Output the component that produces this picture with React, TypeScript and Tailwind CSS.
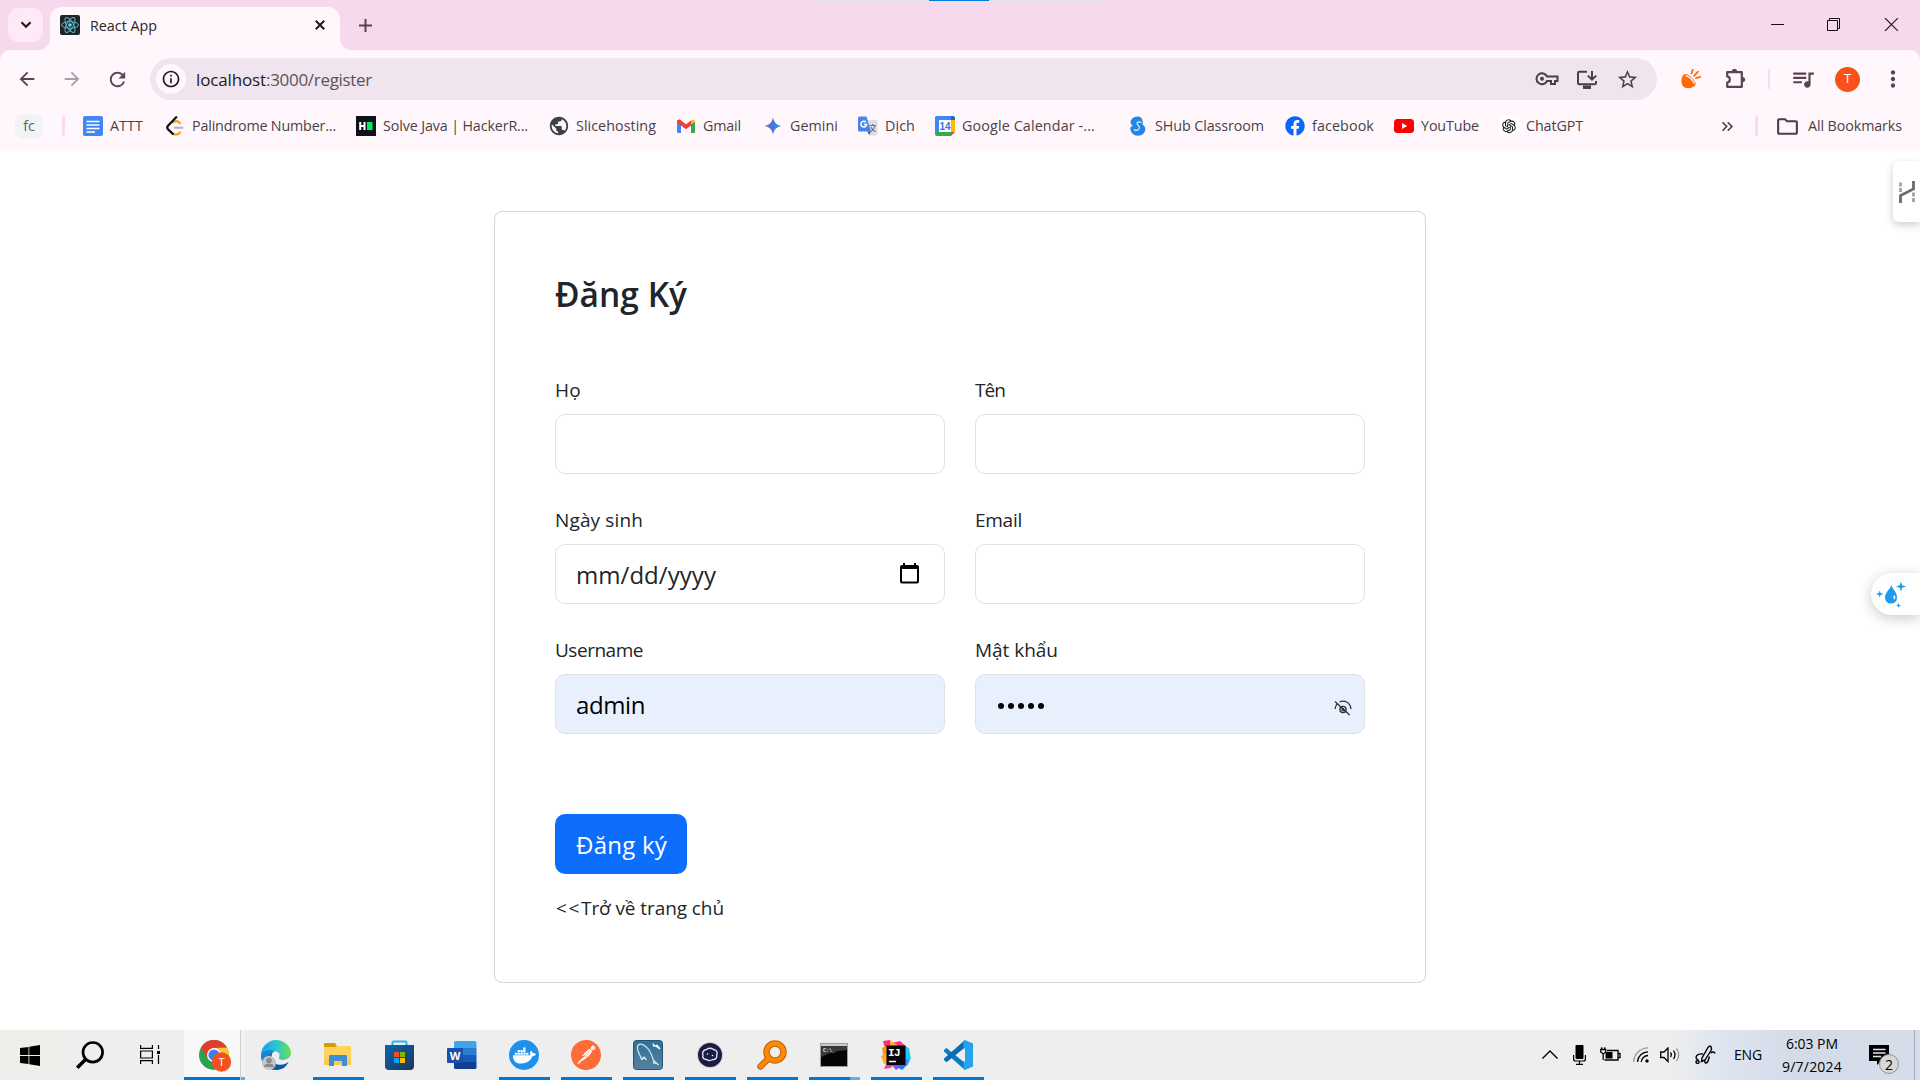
import React, { useLayoutEffect, useRef, useState } from "react";
import {
  MdArrowBack, MdArrowForward, MdRefresh, MdStarBorder, MdQueueMusic, MdMoreVert,
  MdOutlineFolder, MdOutlineInfo, MdKeyboardDoubleArrowRight, MdPublic,
} from "react-icons/md";
import { AiOutlineOpenAI } from "react-icons/ai";
import { FaDocker, FaFacebook } from "react-icons/fa";
import { SiPostman } from "react-icons/si";

/* Text that is spaced out to an exact width. */
function Fit({ w, className = "", children }: { w: number; className?: string; children: string }) {
  const ref = useRef<HTMLSpanElement>(null);
  const [ls, setLs] = useState(0);
  useLayoutEffect(() => {
    if (ref.current) {
      const n = ref.current.getBoundingClientRect().width;
      setLs((w - n) / children.length);
    }
  }, [w, children]);
  return (
    <span ref={ref} className={"inline-block whitespace-pre " + className} style={{ letterSpacing: ls }}>
      {children}
    </span>
  );
}

const ReactLogo = () => (
  <svg width="20" height="20" viewBox="0 0 20 20">
    <rect width="20" height="20" rx="2" fill="#222325" />
    <g fill="none" stroke="#58b6cf" strokeWidth="1">
      <ellipse cx="10" cy="10" rx="8.4" ry="3.3" />
      <ellipse cx="10" cy="10" rx="8.4" ry="3.3" transform="rotate(60 10 10)" />
      <ellipse cx="10" cy="10" rx="8.4" ry="3.3" transform="rotate(120 10 10)" />
    </g>
    <circle cx="10" cy="10" r="1.8" fill="#61dafb" />
  </svg>
);

function TabStrip() {
  return (
    <div className="relative flex h-[50px] bg-[#f7d9ed]">
      <div className="ml-2 mt-2 flex h-[34px] w-[35px] items-center justify-center rounded-[11px] bg-[#feeaf6]">
        <svg width="12" height="8" viewBox="0 0 12 8" fill="none" stroke="#1f1a1e" strokeWidth="2.2"><path d="M1.500 1.300 6 5.800l4.500-4.500" /></svg>
      </div>
      <div className="relative ml-[7px] mt-[7px] flex h-[43px] w-[290px] items-center rounded-t-[12px] bg-[#fff7fb] pb-[7px] pl-[10px] pr-[15px]">
        <svg className="absolute -left-3 bottom-0" width="12" height="12"><path d="M12 0v12H0A12 12 0 0 0 12 0" fill="#fff7fb" /></svg>
        <svg className="absolute -right-3 bottom-0" width="12" height="12"><path d="M0 0v12h12A12 12 0 0 1 0 0" fill="#fff7fb" /></svg>
        <ReactLogo />
        <Fit w={67} className="ml-[10px] pt-[2px] text-[14.3px] leading-5 text-[#2b2629]">React App</Fit>
        <svg className="ml-auto" width="10" height="10" viewBox="0 0 10 10" stroke="#1f1a1e" strokeWidth="2"><path d="m.8.8 8.400 8.400M9.200.8.8 9.200" /></svg>
      </div>
      <svg className="ml-[19px] mt-[19px]" width="13" height="13" stroke="#5a434f" strokeWidth="2"><path d="M0 6.500h13M6.500 0v13" /></svg>
      <div className="absolute left-[809px] top-0 h-px w-[301px] bg-[#e2e0e2]" />
      <div className="absolute left-[929px] top-0 h-px w-[60px] bg-[#0078d7]" />
      <svg className="ml-auto mr-[22px] mt-[18px]" width="127" height="13" fill="none" stroke="#111" strokeWidth="1">
        <path d="M0 6.500h13" />
        <path d="M56.500 2.500h10v10h-10zM58.500 2.500v-2h10v10h-2" />
        <path d="m114 0 13 13M127 0l-13 13" stroke="#222" strokeWidth="1.200" />
      </svg>
    </div>
  );
}

function Toolbar() {
  return (
    <div className="bg-[#f7d9ed]">
      <div className="flex h-[58px] items-center rounded-t-[10px] bg-[#fff7fb] text-[#5a434f]">
        <MdArrowBack className="ml-[16px] size-[22px]" />
        <MdArrowForward className="ml-[23px] size-[22px] text-[#aaa0a7]" />
        <MdRefresh className="ml-[23px] size-[23px]" />
        <div className="ml-[21px] flex h-[42px] w-[1507px] items-center rounded-full bg-[#f0e5ee] text-[#4b3f47]">
          <div className="ml-[6px] flex size-[30px] items-center justify-center rounded-full bg-[#fff7fb]">
            <MdOutlineInfo className="size-[20px] text-[#1f1a1e]" />
          </div>
          <div className="ml-[10px] flex pt-[2px] text-[17px] leading-6">
            <Fit w={70} className="text-[#1f1a1e]">localhost</Fit>
            <Fit w={106} className="text-[#5c5159]">:3000/register</Fit>
          </div>
          <svg className="ml-auto" width="24" height="16" viewBox="0 0 24 16" fill="none" stroke="currentColor" strokeWidth="2">
            <path d="M12 5.500h10.500v4.500h-2.500v3h-4v-3h-4A5.500 5.500 0 1 1 12 5.500z" />
            <circle cx="7" cy="7.700" r="2" fill="currentColor" stroke="none" />
          </svg>
          <svg className="ml-[17px] mt-px" width="22" height="20" viewBox="0 0 22 20" fill="none" stroke="currentColor" strokeWidth="2">
            <path d="M11 1.800H3.200q-1.200 0-1.200 1.200v10q0 1.200 1.200 1.200h15.600q1.200 0 1.200-1.200v-2M16 1v8M11.800 5.600 16 9.600l4.200-4" />
            <path d="M7 17.200h8" strokeWidth="3.500" />
          </svg>
          <MdStarBorder className="ml-[18px] mr-[18px] mt-px size-[23px]" />
        </div>
        <svg className="ml-[24px]" width="20" height="20" viewBox="0 0 20 20">
          <path d="M2 6.200C-.6 10.500.2 16 3.200 18.300c4 2.200 9.300.8 11.600-2.800C10.500 15.600 5 12.500 2 6.200z" fill="#ff6a00" />
          <path d="M2.300 6c1.200-1.800 4.700-.8 8 2.300s5 5.700 4.200 7.200c-1.400 1.300-5-.2-8-3S1.600 7.500 2.300 6z" fill="#ff6a00" />
          <path d="M4.500 7c1.500-.3 3.700 1 5.700 3s3.200 3.600 3 4.600" fill="none" stroke="#fff7fb" strokeWidth="1.300" />
          <path d="M10.500 4.500 11.700.8M13 6.800l4-4.200M15 9.200l4-1.400" stroke="#ff6a00" strokeWidth="1.800" strokeLinecap="round" />
        </svg>
        <svg className="ml-[24px]" width="21" height="21" viewBox="0 0 21 21" fill="none" stroke="currentColor" strokeWidth="2.200">
          <path d="M2.200 3.200h14.600v14.600H2.200v-4.300c3.500-.4 3.500-5.700 0-6.100z" strokeLinejoin="round" />
          <path d="M6.800 2.600a2.700 2.700 0 0 1 5.400 0zM17.500 8a2.600 2.600 0 0 1 0 5.200z" fill="currentColor" stroke="none" />
        </svg>
        <div className="ml-[22px] h-5 w-0.5 bg-[#ffd6f3]" />
        <MdQueueMusic className="ml-[20px] size-[26px]" />
        <div className="ml-[19px] flex size-[25px] items-center justify-center rounded-full bg-[#f9501c] text-[13px] text-white">T</div>
        <MdMoreVert className="ml-[20px] size-[26px]" />
      </div>
    </div>
  );
}

const icons: Record<string, React.ReactNode> = {
  docs: <svg width="20" height="20"><rect width="20" height="20" rx="2" fill="#4285f4" /><path d="M3.500 5.500h13M3.500 9h13M3.500 12.500h13M3.500 16h8.500" stroke="#fff" strokeWidth="1.700" /></svg>,
  leet: (
    <svg width="20" height="20" fill="none" strokeLinecap="round" strokeWidth="2.300">
      <path d="M8.500 6.200c2.300-1.800 4.200-1.400 6.500 1M8.300 17.700c2.200 1.500 4.400 1.200 6.700-1.200" stroke="#f9a11b" />
      <path d="M9.500 11.800h8" stroke="#b3b3b3" strokeWidth="2" />
      <path d="M11.200 1.300 3 9.700q-1.500 1.800 0 3.600l4.800 4.600" stroke="#111" />
    </svg>
  ),
  hr: <svg width="20" height="20"><rect width="20" height="20" fill="#0e141e" /><path d="M4.200 6v8M8.500 6v8M4 10h5" stroke="#fff" strokeWidth="2" /><rect x="11" y="6" width="5.500" height="8" fill="#00ea64" /></svg>,
  slice: <MdPublic className="size-[22px] -m-px text-[#3c4043]" />,
  gmail: (
    <svg width="20" height="20" viewBox="0 0 20 20">
      <path d="M1 5v11q0 1 1 1h3V8z" fill="#4285f4" /><path d="M19 5v11q0 1-1 1h-3V8z" fill="#34a853" />
      <path d="M15 8.500V4.600c2-1.500 4-.6 4 1.400z" fill="#fbbc04" /><path d="M5 8.500V4.600C3 3.100 1 4 1 6z" fill="#c5221f" />
      <path d="m1 5.500 2.500-2.300L10 8.300l5-3.800v5L10 13.200 1 6.400z" fill="#ea4335" />
    </svg>
  ),
  gemini: (
    <svg width="20" height="20" viewBox="0 0 20 20">
      <defs><linearGradient id="gem"><stop offset="0" stopColor="#8a5fd0" /><stop offset=".5" stopColor="#4b74d8" /><stop offset="1" stopColor="#16a8e8" /></linearGradient></defs>
      <path d="M10 1.300c.7 5 3.700 8 8.700 8.700-5 .7-8 3.700-8.700 8.700-.7-5-3.700-8-8.700-8.700 5-.7 8-3.700 8.700-8.700" fill="url(#gem)" />
    </svg>
  ),
  dich: (
    <svg width="20" height="20" viewBox="0 0 20 20">
      <path d="M7 4h11q1.500 0 1.500 1.500V18q0 1.500-1.500 1.500h-6.500z" fill="#dcdee2" />
      <path d="M11.500 9.500h6.500M14.800 8v1.500M16.800 10c-.5 2.500-2 4.200-4 5.500M12.800 11c1 2 2.500 3.500 4.700 4.800" stroke="#71787f" strokeWidth="1.200" fill="none" />
      <path d="M1.500.5h7l4.500 15H1.500Q0 15.500 0 14V2Q0 .5 1.500.5" fill="#4a86ea" /><path d="m9.500 15.500 3.500 0-2 3.500z" fill="#2b4fa8" />
      <path d="M8 6.200A2.900 2.900 0 1 0 8.700 8.500H5.900" fill="none" stroke="#fff" strokeWidth="1.400" />
    </svg>
  ),
  cal: (
    <svg width="20" height="20" viewBox="0 0 20 20">
      <path d="M0 2Q0 0 2 0h16q2 0 2 2v2H0z" fill="#1967d2" /><path d="M0 3h4v13H0zM2 0h14v4H0V2z" fill="#4285f4" />
      <path d="M16 4h4v12h-4z" fill="#fbbc04" /><path d="M0 16h16v4H2q-2 0-2-2z" fill="#34a853" /><path d="M16 16h4l-4 4z" fill="#ea4335" />
      <rect x="4" y="4" width="12" height="12" fill="#fff" />
      <text x="10" y="13.700" textAnchor="middle" fontSize="10" fontWeight="700" fill="#3273dc" fontFamily="Liberation Sans">14</text>
    </svg>
  ),
  shub: (
    <svg width="20" height="20" viewBox="0 0 20 20">
      <path d="M14 3C12.500-.8 6 0 4 2.800 1.500 6 2.500 8.500 5 10c-2.500 0-3.500 2-2.200 5C4.500 20.500 12 21 15.500 17.500c3-3.500 2-7-1-9C15 7 15 4.800 14 3" fill="#2486e4" />
      <path d="M13.500 6.500c-3-1.500-5.500 0-4 2s3 2.500 1.500 4.500-4 1.500-5 .5" fill="none" stroke="#fff7fb" strokeWidth="1.100" />
    </svg>
  ),
  fb: <FaFacebook className="size-5 text-[#0866ff]" />,
  yt: <svg width="20" height="20"><rect y="3" width="20" height="14" rx="3.500" fill="#f00" /><path d="m8 7 5.200 3L8 13z" fill="#fff" /></svg>,
  gpt: <span className="flex size-5 items-center justify-center rounded-sm bg-white"><AiOutlineOpenAI className="size-[18px] text-[#222]" /></span>,
};

const bookmarks: { cls: string; icon: string; label: string; w: number }[] = [
  { cls: "w-[82px]", icon: "docs", label: "ATTT", w: 33 },
  { cls: "w-[191px]", icon: "leet", label: "Palindrome Number...", w: 144 },
  { cls: "w-[193px]", icon: "hr", label: "Solve Java | HackerR...", w: 145 },
  { cls: "w-[127px]", icon: "slice", label: "Slicehosting", w: 80 },
  { cls: "w-[87px]", icon: "gmail", label: "Gmail", w: 38 },
  { cls: "w-[95px]", icon: "gemini", label: "Gemini", w: 48 },
  { cls: "w-[77px]", icon: "dich", label: "Dịch", w: 30 },
  { cls: "w-[193px]", icon: "cal", label: "Google Calendar -...", w: 133 },
  { cls: "w-[157px]", icon: "shub", label: "SHub Classroom", w: 109 },
  { cls: "w-[109px]", icon: "fb", label: "facebook", w: 62 },
  { cls: "w-[105px]", icon: "yt", label: "YouTube", w: 58 },
  { cls: "w-[90px]", icon: "gpt", label: "ChatGPT", w: 57 },
];

function Bookmarks() {
  return (
    <div className="flex h-[43px] items-center bg-[#fff7fb] pb-[7px] text-[14.3px] leading-5 text-[#4b3f47]">
      <div className="ml-[15px] flex h-[25px] w-7 items-center justify-center rounded-lg bg-[#f1f3f4] pb-px text-[#5f6368]">fc</div>
      <div className="ml-[19px] h-5 w-[3px] rounded bg-[#ffd6f3]" />
      <div className="ml-[18px] flex">
        {bookmarks.map((b) => (
          <div key={b.icon} className={"flex shrink-0 items-center " + b.cls}>
            <span className="size-5 shrink-0">{icons[b.icon]}</span>
            <Fit w={b.w} className="ml-[7px]">{b.label}</Fit>
          </div>
        ))}
      </div>
      <MdKeyboardDoubleArrowRight className="ml-[129px] size-[19px]" />
      <div className="ml-[18px] h-5 w-[3px] rounded bg-[#ffd6f3]" />
      <MdOutlineFolder className="ml-[17px] size-[25px]" />
      <Fit w={94} className="ml-[8px]">All Bookmarks</Fit>
    </div>
  );
}

function Field({ label, w, fill, children }: { label: string; w: number; fill?: boolean; children?: React.ReactNode }) {
  return (
    <label className="block w-[390px]">
      <div className="h-[30px] pt-px text-[19px] leading-[30px] text-[#212529]"><Fit w={w}>{label}</Fit></div>
      <div className={"mt-[10px] flex h-[60px] items-center rounded-[10px] border border-[#dee2e6] pl-5 " + (fill ? "bg-[#e8f0fe]" : "bg-white")}>
        {children}
      </div>
    </label>
  );
}

function RegisterCard() {
  return (
    <div className="mt-[60px] h-[772px] w-[932px] rounded-[8px] border border-[#d3d3d3] bg-white px-[60px] pt-[60px]">
      <h3 className="h-[44px] text-[33.500px] font-semibold leading-[42px] text-[#212529]"><Fit w={132} className="pt-px">Đăng Ký</Fit></h3>
      <div className="mt-[58px] grid grid-cols-[390px_390px] gap-[30px]">
        <Field label="Họ" w={26} />
        <Field label="Tên" w={30} />
        <Field label="Ngày sinh" w={88}>
          <Fit w={140} className="pt-[2px] text-[24px] leading-9 text-[#212529]">mm/dd/yyyy</Fit>
          <svg className="mb-px ml-auto mr-[25px]" width="19" height="21" viewBox="0 0 19 21"><path d="M1 5v13.500q0 1 1 1h15q1 0 1-1V5" fill="none" stroke="#000" strokeWidth="2" /><path d="M0 6V4q0-2 2-2h15q2 0 2 2v2zM3 0h2v3H3zM14 0h2v3h-2z" /></svg>
        </Field>
        <Field label="Email" w={47} />
        <Field label="Username" w={88} fill>
          <Fit w={69} className="pt-[2px] text-[24px] leading-9 text-black">admin</Fit>
        </Field>
        <Field label="Mật khẩu" w={83} fill>
          <div className="ml-[2px] flex gap-1 pt-[3px]">
            {[0, 1, 2, 3, 4].map((i) => <span key={i} className="size-[6px] rounded-full bg-black" />)}
          </div>
          <svg className="ml-auto mr-[12px] mt-[7px]" width="18" height="16" viewBox="0 0 19 17" fill="none" stroke="#2b3036" strokeWidth="1.400">
            <path d="M1 1.500 16.500 16M6 2c5-2 11.500.5 12 7.500M1 9.500C1.200 7 2.300 5 4 3.500" /><circle cx="9.500" cy="10" r="3.300" /><circle cx="9.500" cy="10" r="1" />
          </svg>
        </Field>
      </div>
      <button className="mt-20 flex h-[60px] w-[132px] items-center rounded-[10px] bg-[#0d6efd] pl-[21px] pt-px text-[24px] text-white"><Fit w={91}>Đăng ký</Fit></button>
      <div className="mt-[19px] flex pl-px text-[19px] leading-[30px] text-[#212529]"><Fit w={25}>{"<<"}</Fit><Fit w={143}>Trở về trang chủ</Fit></div>
    </div>
  );
}

const apps: { name: string; bar: string; art: React.ReactNode }[] = [
  {
    name: "edge", bar: "", art: (
      <svg width="32" height="32" viewBox="0 0 32 32">
        <defs>
          <linearGradient id="eg1" x1="0" x2="1"><stop offset="0" stopColor="#1a9fe0" /><stop offset=".5" stopColor="#2cc4d8" /><stop offset="1" stopColor="#6be04f" /></linearGradient>
        </defs>
        <path d="M1 16C1 8 8 1 16 1s15 6 15 13c0 4-3.500 7-8 7-3 0-4.500-1-4-2.500 2-4-1-6.500-5-6C8 12.500 2.500 15 1 16" fill="url(#eg1)" />
        <path d="M1 16c3-4 9-5.500 13-4-4 3-3.500 11 3.500 13.500 4.500 1 8.500-.5 11-2.500C26 29 21 31 16 31 8 31 1 25 1 16" fill="#0c59a4" />
        <path d="M1 16c3-4 9-5 13-3.500C8 15 7 24 14 30.800 6 30 1 23 1 16" fill="#1b83d6" />
        <circle cx="9" cy="24" r="7" fill="#c6c6c6" /><circle cx="9" cy="21.500" r="2.800" fill="#8a8a8a" /><path d="M4 28q0-3.500 5-3.500t5 3.500z" fill="#8a8a8a" />
      </svg>
    ),
  },
  {
    name: "explorer", bar: "bg-[#0078d7]", art: (
      <svg width="32" height="32" viewBox="0 0 32 32">
        <path d="M2 5q0-1 1-1h10l2 3v4H2z" fill="#d99a06" /><path d="M2 8h11l2-1h14v19H2z" fill="#ffd45e" /><path d="M2 20h27v6H2z" fill="#fbcb4b" />
        <path d="M7 27V17q0-1 1-1h16q1 0 1 1v10h-5v-5h-8v5z" fill="#3c8fd6" />
      </svg>
    ),
  },
  {
    name: "store", bar: "", art: (
      <svg width="32" height="32" viewBox="1 0 32 32">
        <defs><linearGradient id="st" x1="0" y1="0" x2="1" y2="1"><stop stopColor="#0a66b5" /><stop offset="1" stopColor="#1d3557" /></linearGradient></defs>
        <path d="M9.500 7V3.500q0-1 1-1h12q1 0 1 1V7" fill="none" stroke="#27b5f0" strokeWidth="2" />
        <path d="M2 6h29v21q0 4-4 4H6q-4 0-4-4z" fill="url(#st)" />
        <path d="M11 13h5v5h-5z" fill="#f25022" /><path d="M17 13h5v5h-5z" fill="#7fba00" /><path d="M11 19h5v5h-5z" fill="#00a4ef" /><path d="M17 19h5v5h-5z" fill="#ffb900" />
      </svg>
    ),
  },
  {
    name: "word", bar: "", art: (
      <svg width="32" height="32" viewBox="0 0 32 32">
        <path d="M8 3.500q0-1.500 1.500-1.500H29q1.500 0 1.500 1.500V9H8z" fill="#41a5ee" /><path d="M8 9h22.500v7H8z" fill="#2b7cd3" /><path d="M8 16h22.500v7H8z" fill="#185abd" /><path d="M8 23h22.500v5.500q0 1.500-1.500 1.500H9.500Q8 30 8 28.500z" fill="#103f91" />
        <rect x="1" y="9" width="16" height="15" rx="1" fill="#1a51ab" />
        <text x="9" y="20.500" textAnchor="middle" fontSize="11" fontWeight="700" fill="#fff" fontFamily="Open Sans">W</text>
      </svg>
    ),
  },
  { name: "docker", bar: "bg-[#0078d7]", art: <span className="flex size-[30px] items-center justify-center rounded-full bg-[#1d91ec]"><FaDocker className="size-[23px] text-white" /></span> },
  { name: "postman", bar: "bg-[#0078d7]", art: <span className="flex size-[30px] rounded-full bg-white"><SiPostman className="size-[30px] text-[#ff6c37]" /></span> },
  {
    name: "mysql", bar: "bg-[#0078d7]", art: (
      <svg width="30" height="30" viewBox="0 0 30 30">
        <defs><linearGradient id="my" x1="0" y1="0" x2="0" y2="1"><stop stopColor="#2f7196" /><stop offset="1" stopColor="#55819c" /></linearGradient></defs>
        <rect x=".5" y=".5" width="29" height="29" rx="3" fill="url(#my)" stroke="#1f5575" />
        <path d="M9 20C7 15 4 11 4.500 7S9 3.500 12 6c5 3.500 7 9 8.500 14.500l5 4.500M21 20l-.5 3 3 .5M9 20l-1-3M9 20l2-3 2.500 3" fill="none" stroke="#d9e8f0" strokeWidth="1.200" />
        <path d="m20 3 2 2.500 2-1 3.500 4-1 1-4-3-2 .5L19.500 4z" fill="#fff" />
      </svg>
    ),
  },
  {
    name: "ring", bar: "bg-[#0078d7]", art: (
      <svg width="30" height="30" viewBox="0 0 30 30">
        <circle cx="15" cy="15" r="13" fill="#cfcfd2" /><circle cx="15" cy="15" r="12" fill="#1a1c44" />
        <path d="M11.500 9.500c2-1.500 5-1.500 7 0 3 .3 4.500 3 3.200 5.500.7 3-1.500 5-4 4.500-2 1.200-4.500 1.200-6 0-3 .3-4.700-2-3.700-4.500-1.200-2.500.5-5 3.500-5.500z" fill="none" stroke="#dfe1f0" strokeWidth="1.400" />
        <circle cx="12.500" cy="14" r=".8" fill="#fff" /><circle cx="17.500" cy="15.500" r=".8" fill="#fff" />
      </svg>
    ),
  },
  {
    name: "finder", bar: "bg-[#0078d7]", art: (
      <svg width="30" height="30" viewBox="0 0 30 30" fill="none" strokeLinecap="round">
        <g stroke="#b9651b" strokeWidth="6.500"><circle cx="18" cy="12" r="8.500" /><path d="m11.500 18.500-8 8" /></g>
        <g stroke="#ff8a00" strokeWidth="4.300"><circle cx="18" cy="12" r="8.500" /><path d="m11.500 18.500-8 8" /></g>
      </svg>
    ),
  },
  {
    name: "terminal", bar: "bg-[linear-gradient(90deg,#0078d7_41px,#66ade7_41px)]", art: (
      <svg width="28" height="24" viewBox="0 0 28 24" className="mb-px">
        <rect x=".5" y=".5" width="27" height="23" fill="#050505" stroke="#9aa0a6" /><path d="M1 1h26v2H1z" fill="#c8ccd0" />
        <path d="M1 3h26v4Q12 8 1 14z" fill="#3a3a3a" />
        <text x="3" y="9" fontSize="5" fill="#eee" fontFamily="Liberation Mono" fontWeight="700">C:\_</text>
      </svg>
    ),
  },
  {
    name: "idea", bar: "bg-[#0078d7]", art: (
      <svg width="30" height="30" viewBox="0 0 30 30">
        <path d="M2 1 9 0l4 6-8 6z" fill="#ff2d6f" /><path d="m11 3 8-2 9 8-8 6z" fill="#ff318c" /><path d="m9 1 8 4-8 3z" fill="#ffb020" />
        <path d="m20 5 8 3 2 11-7 4z" fill="#21c8f5" /><path d="M1 8 8 5l3 11-8 4z" fill="#ff9419" /><path d="m0 16 7-4 4 9-8 3z" fill="#ffa928" />
        <path d="m8 22 14-2 5 4-6 6z" fill="#087cfa" /><path d="m22 18 7 2-3 6-5-2z" fill="#3d8df7" /><path d="m3 29 4-9 7 5-5 3z" fill="#fc3a9c" /><path d="m11 25 6-2 1 5-3 2z" fill="#8e4df0" />
        <rect x="5.500" y="5.500" width="19" height="19.500" fill="#050308" />
        <text x="7" y="15.500" fontSize="11" fontWeight="700" fill="#fff" fontFamily="Liberation Mono" letterSpacing="-.6">IJ</text><path d="M8 21.500h7" stroke="#fff" strokeWidth="1.500" />
      </svg>
    ),
  },
  {
    name: "code", bar: "bg-[#0078d7]", art: (
      <svg width="30" height="30" viewBox="0 0 30 30">
        <path d="m1 10 2.500-2L22 23v7L1 11.500z" fill="#0b7cc4" /><path d="m1 20 2.500 2.200L22 7.500V0L1 18.500z" fill="#0a6db3" /><path d="m22 0 8 3.500v23L22 30l-1.500-1V1z" fill="#25a4ee" /><path d="M22 8v14l-8-7z" fill="#efefef" />
      </svg>
    ),
  },
];

function Taskbar() {
  return (
    <div className="flex h-[50px] bg-[linear-gradient(90deg,#eeeeea_0,#eeeeee_130px,#eeeeee_1670px,#dfe5f0_1720px,#d3dbe9_1800px,#d6deeb_1920px)] text-black">
      <svg className="ml-5 mt-[14.500px]" width="20" height="21" viewBox="0 0 20 21"><path d="M0 3 8.500 2v8H0zM9.300 1.800 20 0v10H9.300zM0 11h8.500v8L0 18zM9.300 11H20v10L9.300 19.300z" /></svg>
      <svg className="ml-9 mt-[11px]" width="28" height="28" viewBox="0 0 28 28" fill="none" stroke="#000"><circle cx="16.800" cy="11.300" r="9.800" strokeWidth="2.700" /><path d="M10 18 1.200 26.800" strokeWidth="3.500" /></svg>
      <svg className="ml-9 mt-[15px]" width="20" height="19" viewBox="0 0 20 19" fill="none" stroke="#000" strokeWidth="1.200"><path d="M.6 0v3.400h11.800V0M.6 19v-3.400h11.800V19M.6 6h11.800v7H.6zM18.500 0v4M18.500 10v9" /><path d="M17 6h3v3h-3z" fill="#000" stroke="none" /></svg>
      <div className="ml-6 flex h-[50px] w-14 flex-col items-center justify-between bg-[#f8f8f8]">
        <svg className="ml-[6px] mt-[9px]" width="34" height="34" viewBox="0 0 34 34">
          <circle cx="16" cy="16" r="15" fill="#2ba24c" /><path d="M3 8.500A15 15 0 0 1 29 8.500L16 9.500 9.500 19z" fill="#e33b2e" /><path d="M29 8.500A15 15 0 0 1 17 31l6-12-7-10z" fill="#fcc934" />
          <circle cx="16" cy="16" r="7" fill="#fff" /><circle cx="16" cy="16" r="5.600" fill="#3f7fea" />
          <circle cx="23.500" cy="23" r="9.700" fill="#f4511e" /><text x="23.500" y="27" textAnchor="middle" fontSize="11" fill="#fff" fontFamily="Open Sans">T</text>
        </svg>
        <div className="h-[3px] w-full bg-[#0078d7]" />
      </div>
      <div className="flex w-[5px] flex-col justify-end border-l border-[#cfcfcf] bg-[#f3f3f3]"><div className="h-[3px] bg-[#66ade7]" /></div>
      {apps.map((a) => (
        <div key={a.name} className="flex h-[50px] w-[62px] flex-col items-center">
          <div className="flex h-[47px] items-center pt-[3px]">{a.art}</div>
          <div className={"h-[3px] w-[51px] " + a.bar} />
        </div>
      ))}
      <div className="ml-auto flex">
        <svg className="mt-[20px]" width="16" height="9" fill="none" stroke="#000" strokeWidth="1.400"><path d="m.5 8.500 7.500-7.500 7.500 7.500" /></svg>
        <svg className="ml-[15px] mt-[15px]" width="13" height="20"><rect x="2.500" width="8" height="14" rx="1" /><path d="M.6 10v4q0 2 2 2h7.800q2 0 2-2v-4M6.500 16v3M3 19.300h7" fill="none" stroke="#000" strokeWidth="1.200" /></svg>
        <svg className="ml-[14px] mt-[17px]" width="21" height="16" fill="none" stroke="#000" strokeWidth="1.300"><path d="M7 3.500h11v9.500H4.500M18.500 6.500h1.500v4h-1.500M.7 2.500h5v2.500L3.200 7 .7 5zM1.700.3v2.200M4.700.3v2.200M3.200 7v6" /><path d="M5.500 5h7v6.500h-7z" fill="#000" stroke="none" /></svg>
        <svg className="ml-[12px] mt-[17px]" width="16" height="16" fill="none" strokeWidth="1.300"><path d="M.7 15A14.500 14.500 0 0 1 15 .8" stroke="#999" /><path d="M4.500 15A10.700 10.700 0 0 1 15 4.800M8.200 15A7 7 0 0 1 15 8.500" stroke="#000" /><circle cx="14" cy="14" r="1.700" fill="#000" /></svg>
        <svg className="ml-[11px] mt-[17px]" width="21" height="16" fill="none" stroke="#000" strokeWidth="1.300"><path d="M.7 5H4l4-4v13.500l-4-4H.7zM10.500 5.500q1.700 2.300 0 4.500M13.500 3.500q3 4.300 0 8.500" /><path d="M16.500 1.500q4.500 6.300 0 12.500" stroke="#999" /></svg>
        <svg className="ml-[14px] mt-[15px]" width="21" height="21" viewBox="0 0 21 21" fill="none" stroke="#000" strokeWidth="1.400"><path d="m7 13 6-10.500Q15 0 16 1.800t0 3.700L10 15 6.500 16.500z" /><path d="M8 9C4 8.500 1 10 1 12.500S5 15 4 17.500c-.5 1.500-3 1-3-.5 0-1 1-1.500 2-1.500M10 15c-1 3 1 4 2.500 2s1-4 2-5.500M15.500 8c2-1.500 4-1.500 4.500.5" /></svg>
        <Fit w={28} className="ml-[18px] mt-[15px] text-[14px] leading-5">ENG</Fit>
        <div className="ml-[19px] mt-[2px] w-[62px] text-center text-[14px] leading-[23px]"><Fit w={52}>6:03 PM</Fit><Fit w={60}>9/7/2024</Fit></div>
        <div className="relative ml-[26px] mt-[15px] h-9 w-[45px]">
          <svg width="20" height="20" viewBox="0 0 20 20"><path d="M0 0h20v16h-8l-4 4v-4H0z" /><path d="M4 4.500h12.500M4 8h12.500M4 11.500h8" stroke="#dfe5f0" strokeWidth="1.300" /></svg>
          <span className="absolute left-[10px] top-[9px] flex size-5 items-center justify-center rounded-full border border-[#909296] bg-[#d8d8d8] text-[14px]">2</span>
        </div>
        <div className="mr-[5px] w-px bg-[#a3abb8]" />
      </div>
    </div>
  );
}

export default function App() {
  return (
    <div className="flex h-[1080px] w-[1920px] flex-col overflow-hidden bg-white font-['Open_Sans','Noto_Sans',sans-serif]">
      <TabStrip />
      <Toolbar />
      <Bookmarks />
      <main className="relative flex h-[879px] justify-center">
        <RegisterCard />
        <div className="absolute right-0 top-[10px] flex h-[61px] w-[27px] items-center justify-center rounded-l-[6px] bg-white pl-px shadow-[0_3px_8px_rgba(0,0,0,.2)]">
          <svg width="16" height="22" viewBox="0 0 16 22" fill="none" stroke="#6b6b6b" strokeWidth="2.800"><path d="M1.500 22v-7.500L14.500 8V0" /><path d="M1.500 1.500v10M14.500 11.500v10" stroke="#a3a3a3" strokeDasharray="4 1.500" /></svg>
        </div>
        <div className="absolute right-0 top-[422px] h-[42px] w-[49px] rounded-l-full bg-white shadow-[0_3px_14px_rgba(0,0,0,.22)]">
          <svg width="40" height="42" fill="#1d9bf0">
            <path d="M20.500 12c.5 4 5.500 6.500 5.500 12.500 0 8-12 8-12 0 0-5 5-8 6.500-12.500" /><path d="M23 22q2.500 2 .5 4.500-2-1.500-.5-4.500" fill="#fff" />
            <path d="m30 8.500 1.200 3.800 4 1.200-4 1.200L30 18.500l-1.200-3.800-4-1.200 4-1.200zM8.700 17.500l.9 2.600 2.800.9-2.800.9-.9 2.600-.9-2.600L5 21l2.800-.9zM27.500 30l.7 1.800 1.800.7-1.800.7-.7 1.800-.7-1.800-1.800-.7 1.800-.7z" />
          </svg>
        </div>
      </main>
      <Taskbar />
    </div>
  );
}
